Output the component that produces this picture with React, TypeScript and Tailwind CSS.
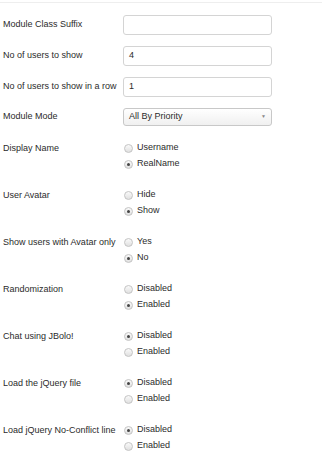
import React from 'react'

type RadioRow = {
  label: string
  options: string[]
  checked: number
}

const textRows: { label: string; value: string }[] = [
  { label: 'Module Class Suffix', value: '' },
  { label: 'No of users to show', value: '4' },
  { label: 'No of users to show in a row', value: '1' },
]

const radioRows: RadioRow[] = [
  { label: 'Display Name', options: ['Username', 'RealName'], checked: 1 },
  { label: 'User Avatar', options: ['Hide', 'Show'], checked: 1 },
  { label: 'Show users with Avatar only', options: ['Yes', 'No'], checked: 1 },
  { label: 'Randomization', options: ['Disabled', 'Enabled'], checked: 1 },
  { label: 'Chat using JBolo!', options: ['Disabled', 'Enabled'], checked: 0 },
  { label: 'Load the jQuery file', options: ['Disabled', 'Enabled'], checked: 0 },
  { label: 'Load jQuery No-Conflict line', options: ['Disabled', 'Enabled'], checked: 0 },
]

const Radio = ({ on }: { on: boolean }) => (
  <span className="w-[9px] h-[9px] rounded-full border border-[#c4c4c4] bg-gradient-to-b from-[#fafafa] to-[#e0e0e0] flex items-center justify-center">
    {on && <span className="w-[3px] h-[3px] rounded-full bg-[#444]" />}
  </span>
)

export default function App() {
  return (
    <div className="w-[322px] h-[464px] bg-white text-[9px] text-[#2b2b2b] font-['Liberation_Sans',Arial,sans-serif]">
      <div className="h-[2px]" />
      <div className="border-t border-[#eeeeee]" />
      <div className="pl-[3px] pt-[12px]">
        {textRows.map((row) => (
          <div key={row.label} className="flex items-center h-[20px] mb-[11px]">
            <div className="w-[120px] whitespace-nowrap">{row.label}</div>
            <div className="w-[149px] h-[20px] border border-[#d4d4d4] rounded-[3px] px-[5px] flex items-center">
              {row.value}
            </div>
          </div>
        ))}
        <div className="flex items-center h-[18px]">
          <div className="w-[120px]">Module Mode</div>
          <div className="w-[149px] h-[18px] border border-[#c8c8c8] rounded-[3px] px-[5px] flex items-center justify-between bg-gradient-to-b from-white to-[#f0f0f0]">
            <span>All By Priority</span>
            <span className="text-[5px] text-[#888]">▼</span>
          </div>
        </div>
        <div className="mt-[14px] flex flex-col gap-[15px]">
          {radioRows.map((row) => (
            <div key={row.label} className="flex">
              <div className="w-[120px] leading-[16px] whitespace-nowrap">{row.label}</div>
              <div className="flex flex-col">
                {row.options.map((opt, i) => (
                  <div key={opt} className="flex items-center h-[16px]">
                    <div className="ml-[1px] mr-[4px]">
                      <Radio on={i === row.checked} />
                    </div>
                    <span>{opt}</span>
                  </div>
                ))}
              </div>
            </div>
          ))}
        </div>
      </div>
    </div>
  )
}
